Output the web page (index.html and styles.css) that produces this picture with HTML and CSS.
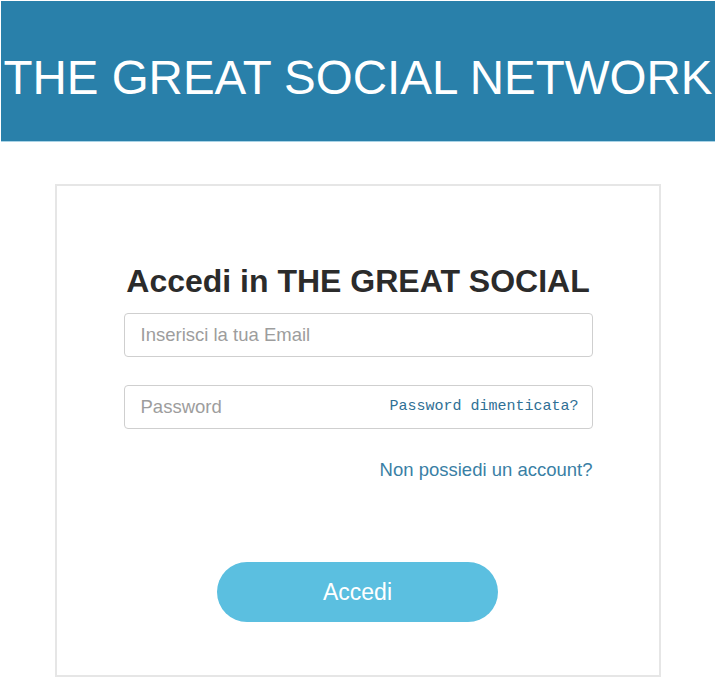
FILE: index.html
```html
<!DOCTYPE html>
<html lang="it">
<head>
<meta charset="utf-8">
<title>THE GREAT SOCIAL NETWORK</title>
<link rel="stylesheet" href="styles.css">
</head>
<body>
<header class="topbar">
  <h1 class="brand">THE GREAT SOCIAL NETWORK</h1>
</header>
<main class="card">
  <h2 class="title">Accedi in THE GREAT SOCIAL</h2>
  <form class="form">
    <div class="field">
      <input class="input" type="email" placeholder="Inserisci la tua Email">
    </div>
    <div class="field field-pass">
      <input class="input" type="password" placeholder="Password">
      <a class="forgot" href="#">Password dimenticata?</a>
    </div>
    <div class="register-row">
      <a class="register" href="#">Non possiedi un account?</a>
    </div>
    <div class="actions">
      <button class="btn" type="button">Accedi</button>
    </div>
  </form>
</main>
</body>
</html>
```
FILE: styles.css
```css
* { box-sizing: border-box; }
html, body { margin: 0; padding: 0; background: #fff; }
body { font-family: "Liberation Sans", Arial, sans-serif; }

.topbar {
  margin: 1px 3px 0 1px;
  height: 141px;
  background: #2980aa;
  border-bottom: 1px solid #a9d3e6;
  padding-top: 53px;
}
.brand {
  margin: 0;
  font-weight: normal;
  font-size: 47.5px;
  line-height: 47px;
  color: #fff;
  text-align: center;
  white-space: nowrap;
}

.card {
  margin: 42px 0 0 55px;
  width: 606px;
  height: 493px;
  border: 2px solid #e6e6e6;
  padding: 77px 0 0;
  display: flex;
  flex-direction: column;
  align-items: center;
}
.title {
  margin: 0;
  font-size: 32px;
  line-height: 36px;
  font-weight: bold;
  color: #2b2b2b;
  text-align: center;
}
.form {
  margin-top: 14px;
  width: 469px;
  display: flex;
  flex-direction: column;
}
.field {
  position: relative;
  height: 44px;
}
.field-pass { margin-top: 28px; }
.input {
  width: 100%;
  height: 44px;
  border: 1px solid #cfcfcf;
  border-radius: 4px;
  padding: 0 16px;
  font-family: "Liberation Sans", Arial, sans-serif;
  font-size: 18.5px;
  color: #555;
  background: #fff;
  outline: none;
}
.input::placeholder { color: #9d9d9d; }
.forgot {
  position: absolute;
  right: 14px;
  top: 0;
  line-height: 44px;
  font-family: "Liberation Mono", "DejaVu Sans Mono", monospace;
  font-size: 15px;
  color: #2f7095;
  text-decoration: none;
}
.register-row {
  margin-top: 30px;
  display: flex;
  justify-content: flex-end;
}
.register {
  font-size: 18.5px;
  line-height: 22px;
  color: #3a7fa5;
  text-decoration: none;
}
.actions {
  margin-top: 81px;
  display: flex;
  justify-content: center;
}
.btn {
  width: 281px;
  height: 60px;
  border: none;
  border-radius: 30px;
  background: #5bbfe0;
  color: #fff;
  font-family: "Liberation Sans", Arial, sans-serif;
  font-size: 23px;
  cursor: pointer;
  margin-left: -1px;
}
```
